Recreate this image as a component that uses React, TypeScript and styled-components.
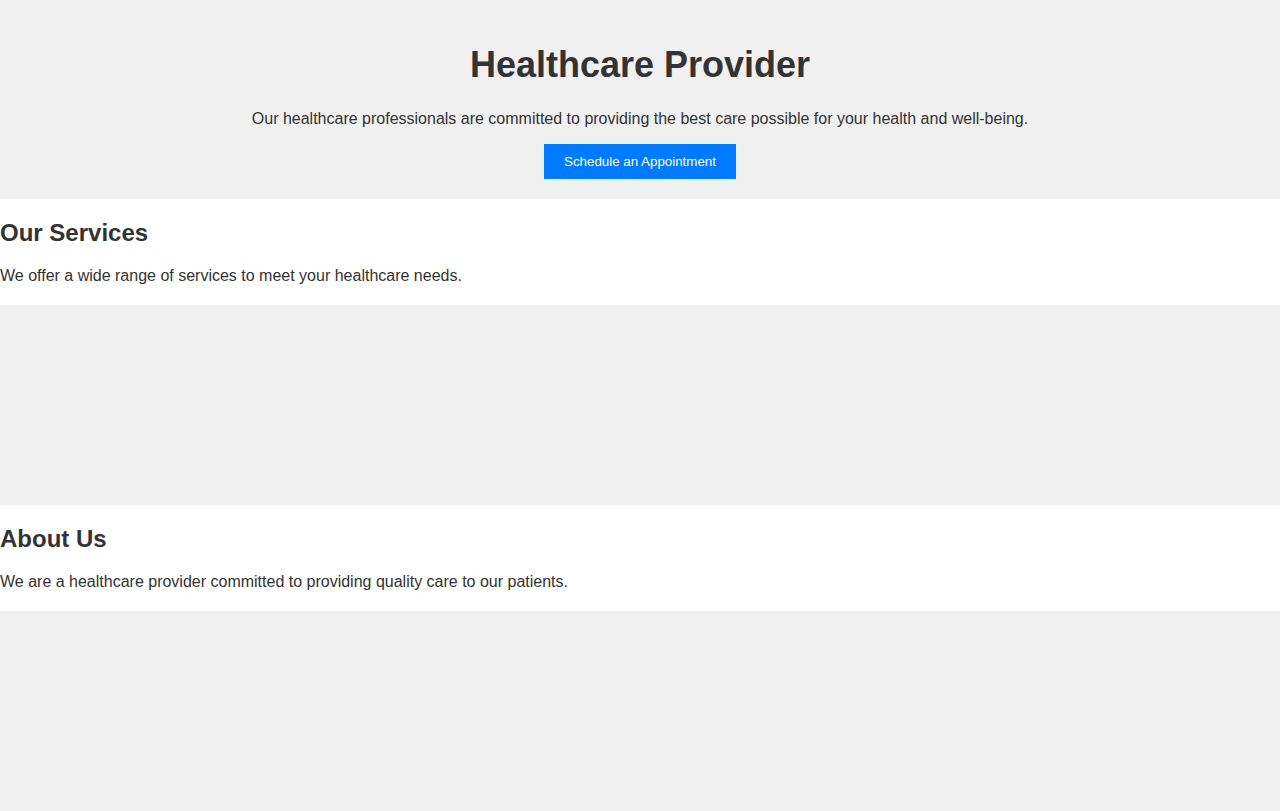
import React from "react";
import styled, { createGlobalStyle } from "styled-components";

const GlobalStyle = createGlobalStyle`
    body {
        margin: 0;
        font-family: "Liberation Sans", Arial, Helvetica, sans-serif;
        color: #333;
        background: #fff;
    }
`;

const Hero = styled.header`
    background-color: #f0f0f0;
    padding: 20px;
    text-align: center;
`;

const Title = styled.h1`
    font-size: 36px;
    margin: 24px 0;
`;

const Text = styled.p`
    font-size: 16px;
    margin: 16px 0;
`;

const Button = styled.button`
    background-color: #007bff;
    color: #fff;
    border: none;
    padding: 10px 20px;
    font-family: "Liberation Sans", Arial, sans-serif;
    font-size: 13.33px;
    cursor: pointer;
`;

const Section = styled.section`
    h2 {
        font-size: 24px;
        margin: 20px 0;
    }
`;

const Placeholder = styled.div`
    height: 200px;
    margin-top: 20px;
    background-color: #f0f0f0;
`;

const sections = [
    {
        title: "Our Services",
        text: "We offer a wide range of services to meet your healthcare needs.",
    },
    {
        title: "About Us",
        text: "We are a healthcare provider committed to providing quality care to our patients.",
    },
];

export default function App() {
    return (
        <>
            <GlobalStyle />
            <Hero>
                <Title>Healthcare Provider</Title>
                <Text>
                    Our healthcare professionals are committed to providing the best
                    care possible for your health and well-being.
                </Text>
                <Button>Schedule an Appointment</Button>
            </Hero>
            {sections.map((s) => (
                <Section key={s.title}>
                    <h2>{s.title}</h2>
                    <Text>{s.text}</Text>
                    <Placeholder />
                </Section>
            ))}
        </>
    );
}
